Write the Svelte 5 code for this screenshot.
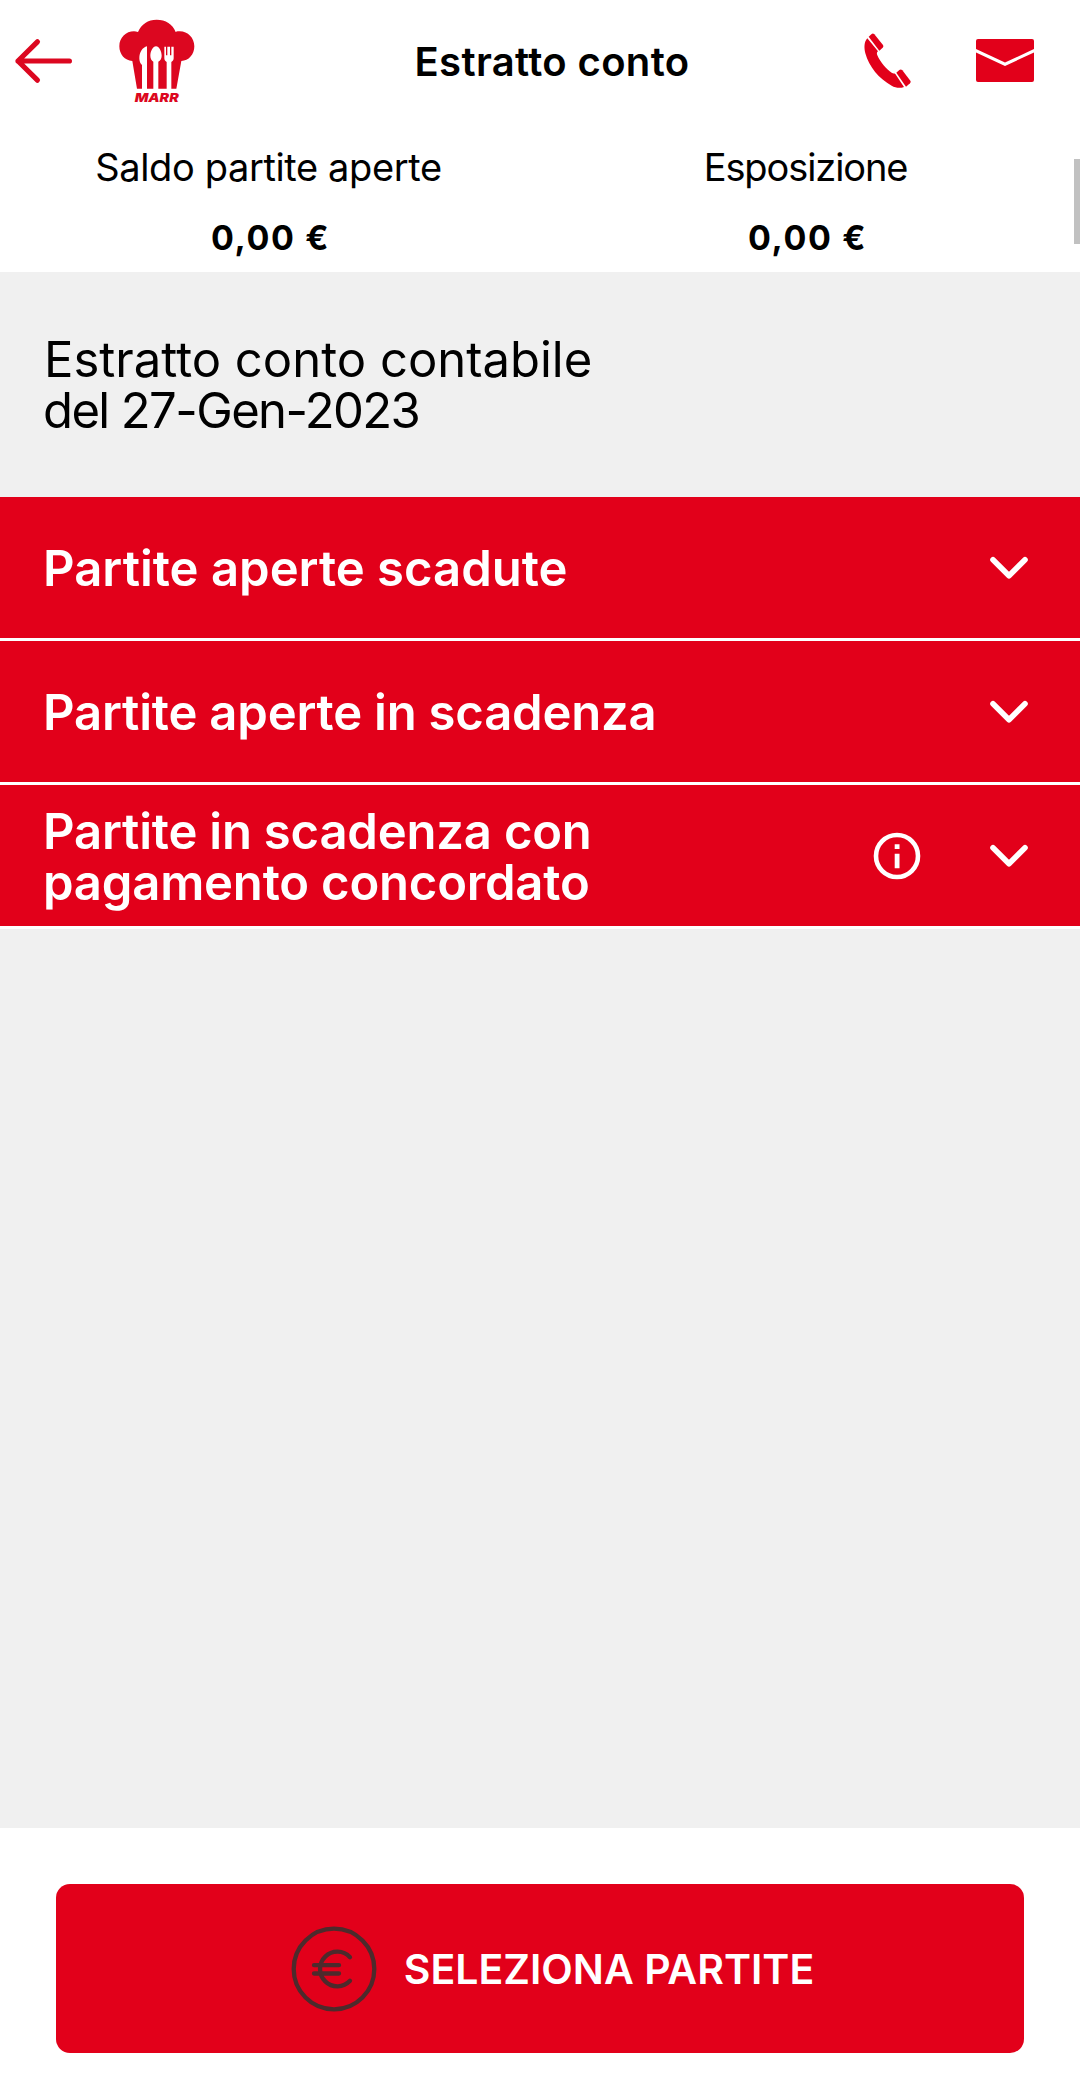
<script lang="ts">
  interface Section {
    id: string;
    name: string;
    info?: boolean;
  }

  const balances = [
    { id: 'open', label: 'Saldo partite aperte', value: '0,00 €' },
    { id: 'exposure', label: 'Esposizione', value: '0,00 €' }
  ];

  const sections: Section[] = [
    { id: 'expired', name: 'Partite aperte scadute' },
    { id: 'expiring', name: 'Partite aperte in scadenza' },
    { id: 'agreed', name: 'Partite in scadenza con pagamento concordato', info: true }
  ];
</script>

<div class="screen">
  <header class="topbar">
    <div class="left">
      <button class="icon-btn" aria-label="Indietro">
        <svg width="60" height="46" viewBox="0 0 60 46" fill="none" stroke="#dc0720" stroke-width="5.2" stroke-linecap="round" stroke-linejoin="round">
          <path d="M55.4 23H4M23.4 3.8L4 23l19.4 19.2"/>
        </svg>
      </button>
      <svg class="logo" width="76" height="84" viewBox="359 54 228 252">
        <path fill="#dc0720" d="M413 263L399 180C376 179 360 160 360 136C360 110 380 91 404 91C408 91 412 92 416 93C426 69 446 56 472 56C499 56 520 69 529 93C533 91 537 91 541 91C566 91 585 111 585 136C585 160 568 180 546 180L531 263Z"/>
        <g fill="#fff">
          <path d="M443 136v128h-15v-72c-5-4-8-11-8-20c0-19 10-33 23-36z"/>
          <path d="M470 136c9 0 17 15 17 28c0 9-4 15-10 18v82h-15v-82c-5-3-9-9-9-18c0-13 8-28 17-28z"/>
          <path d="M495 137h5v26h4v-26h8v26h4v-26h7v35c0 5-3 9-7 11v81h-14v-81c-4-2-7-6-7-11z"/>
        </g>
        <text class="brand" x="406" y="304" textLength="132" lengthAdjust="spacingAndGlyphs">MARR</text>
      </svg>
    </div>
    <h1>Estratto conto</h1>
    <div class="right">
      <button class="icon-btn" aria-label="Telefono">
        <svg width="48" height="56" viewBox="74 68 144 168" fill="#e2001a">
          <path d="M88 79L97 71Q101 68 105 72L131 104Q134 108 130 112L120 121Z"/>
          <path d="M84 84L116 123C112 126 112 130 114 135C122 154 142 178 157 187C162 190 165 188 168 191L194 230C181 235 168 232 157 226C119 206 89 169 78 129C74 112 74 95 84 84Z"/>
          <path d="M171 187L180 179Q185 176 189 180L213 211Q216 215 212 219L200 229Z"/>
        </svg>
      </button>
      <button class="icon-btn" aria-label="Messaggi">
        <svg width="58" height="43" viewBox="0 0 58 43" fill="#e2001a">
          <path d="M2 0h54q2 0 2 2v8L29 23.500L0 10V2q0-2 2-2z"/>
          <path d="M0 13.400L29 27l29-13.600V41q0 2-2 2H2q-2 0-2-2z"/>
        </svg>
      </button>
    </div>
  </header>

  <div class="balances">
    {#each balances as b (b.id)}
      <div class="balance {b.id}">
        <span class="label">{b.label}</span>
        <strong class="value">{b.value}</strong>
      </div>
    {/each}
  </div>

  <main>
    <h2>
      <span class="heading">Estratto conto contabile</span>
      <span class="date">del 27-Gen-2023</span>
    </h2>

    {#each sections as s (s.id)}
      <button class="section {s.id}">
        <span class="name">{s.name}</span>
        {#if s.info}
          <svg class="info" width="48" height="48" viewBox="0 0 48 48">
            <circle cx="24" cy="24" r="21" fill="none" stroke="#fff" stroke-width="4.6"/>
            <path fill="#fff" d="M21.700 12.200h4.800v4.700h-4.800zM21.700 21.700h4.800v14.500h-4.800z"/>
          </svg>
        {/if}
        <svg width="38" height="24" viewBox="0 0 38 24" fill="none" stroke="#fff" stroke-width="5.6" stroke-linecap="round" stroke-linejoin="round">
          <path d="M3 3.700l16 16 16-16"/>
        </svg>
      </button>
    {/each}
  </main>

  <footer>
    <button class="select">
      <svg width="86" height="86" viewBox="0 0 86 86" fill="none" stroke="#4d2a2c" stroke-width="4.3" stroke-linecap="round">
        <circle cx="43" cy="43" r="40.300"/>
        <path d="M59 31.200A17.300 17.300 0 1 0 59 54.800M23 39.200h25M23 47.500h25"/>
      </svg>
      <span>SELEZIONA PARTITE</span>
    </button>
  </footer>

  <div class="scrollbar"></div>
</div>

<style>
  :global(body) {
    margin: 0;
    background: #fff;
  }

  .screen {
    position: relative;
    display: flex;
    flex-direction: column;
    width: 1080px;
    height: 2091px;
    overflow: hidden;
    color: #000;
    font-family: Inter, "Liberation Sans", sans-serif;
  }

  button {
    margin: 0;
    padding: 0;
    border: none;
    background: none;
    color: inherit;
    font: inherit;
  }

  svg {
    display: block;
    flex: none;
    overflow: visible;
  }

  h1,
  h2 {
    margin: 0;
  }

  .topbar {
    display: grid;
    grid-template-columns: 1fr auto 1fr;
    align-items: center;
    height: 121px;
    padding-bottom: 1px;
  }

  .left,
  .right {
    display: flex;
    align-items: center;
  }

  .left {
    gap: 45px;
    padding-left: 14px;
  }

  .right {
    justify-content: flex-end;
    gap: 64px;
    padding-right: 46px;
  }

  .brand {
    fill: #dc0720;
    font-size: 37px;
    font-style: italic;
    font-weight: 900;
  }

  h1 {
    padding: 3px 0 0 24px;
    font-size: 40px;
    font-weight: 600;
    line-height: 48px;
    letter-spacing: 0.35px;
  }

  .balances {
    display: grid;
    grid-template-columns: 1fr 1fr;
    height: 150px;
    padding-right: 6px;
  }

  .balance {
    display: flex;
    flex-direction: column;
    align-items: center;
    gap: 28px;
    padding-top: 22px;
  }

  .label {
    font-size: 38px;
    line-height: 46px;
    letter-spacing: -0.37px;
  }

  .exposure .label {
    letter-spacing: -1.1px;
  }

  .value {
    padding-left: 4px;
    font-size: 34px;
    font-weight: 700;
    line-height: 40px;
    letter-spacing: 1.6px;
  }

  main {
    flex: 1;
    background: #f0f0f0;
  }

  h2 {
    display: flex;
    flex-direction: column;
    align-items: flex-start;
    height: 163px;
    padding: 62px 0 0 43px;
    font-size: 49px;
    font-weight: 400;
    line-height: 51px;
  }

  .heading {
    padding-left: 1px;
  }

  .date {
    letter-spacing: -1.6px;
  }

  .section {
    display: flex;
    align-items: center;
    width: 100%;
    height: 144px;
    padding: 0 52px 0 43px;
    border-bottom: 3px solid #fff;
    background: #e2001a;
    color: #fff;
    font-size: 49px;
    font-weight: 600;
    line-height: 51px;
    text-align: left;
  }

  .name {
    max-width: 640px;
    margin-right: auto;
    padding-top: 2px;
  }

  .expiring .name,
  .agreed .name {
    letter-spacing: -0.2px;
  }

  .info {
    margin-right: 69px;
  }

  footer {
    display: flex;
    align-items: flex-start;
    height: 207px;
    padding: 56px 56px 0;
  }

  .select {
    display: flex;
    flex: 1;
    align-items: center;
    justify-content: center;
    gap: 27px;
    height: 169px;
    padding-left: 25px;
    border-radius: 14px;
    background: #e2001a;
    color: #fff;
    font-size: 41px;
    font-weight: 600;
    white-space: nowrap;
  }

  .scrollbar {
    position: absolute;
    top: 159px;
    right: 0;
    width: 6px;
    height: 85px;
    background: #c1c1c1;
  }
</style>
